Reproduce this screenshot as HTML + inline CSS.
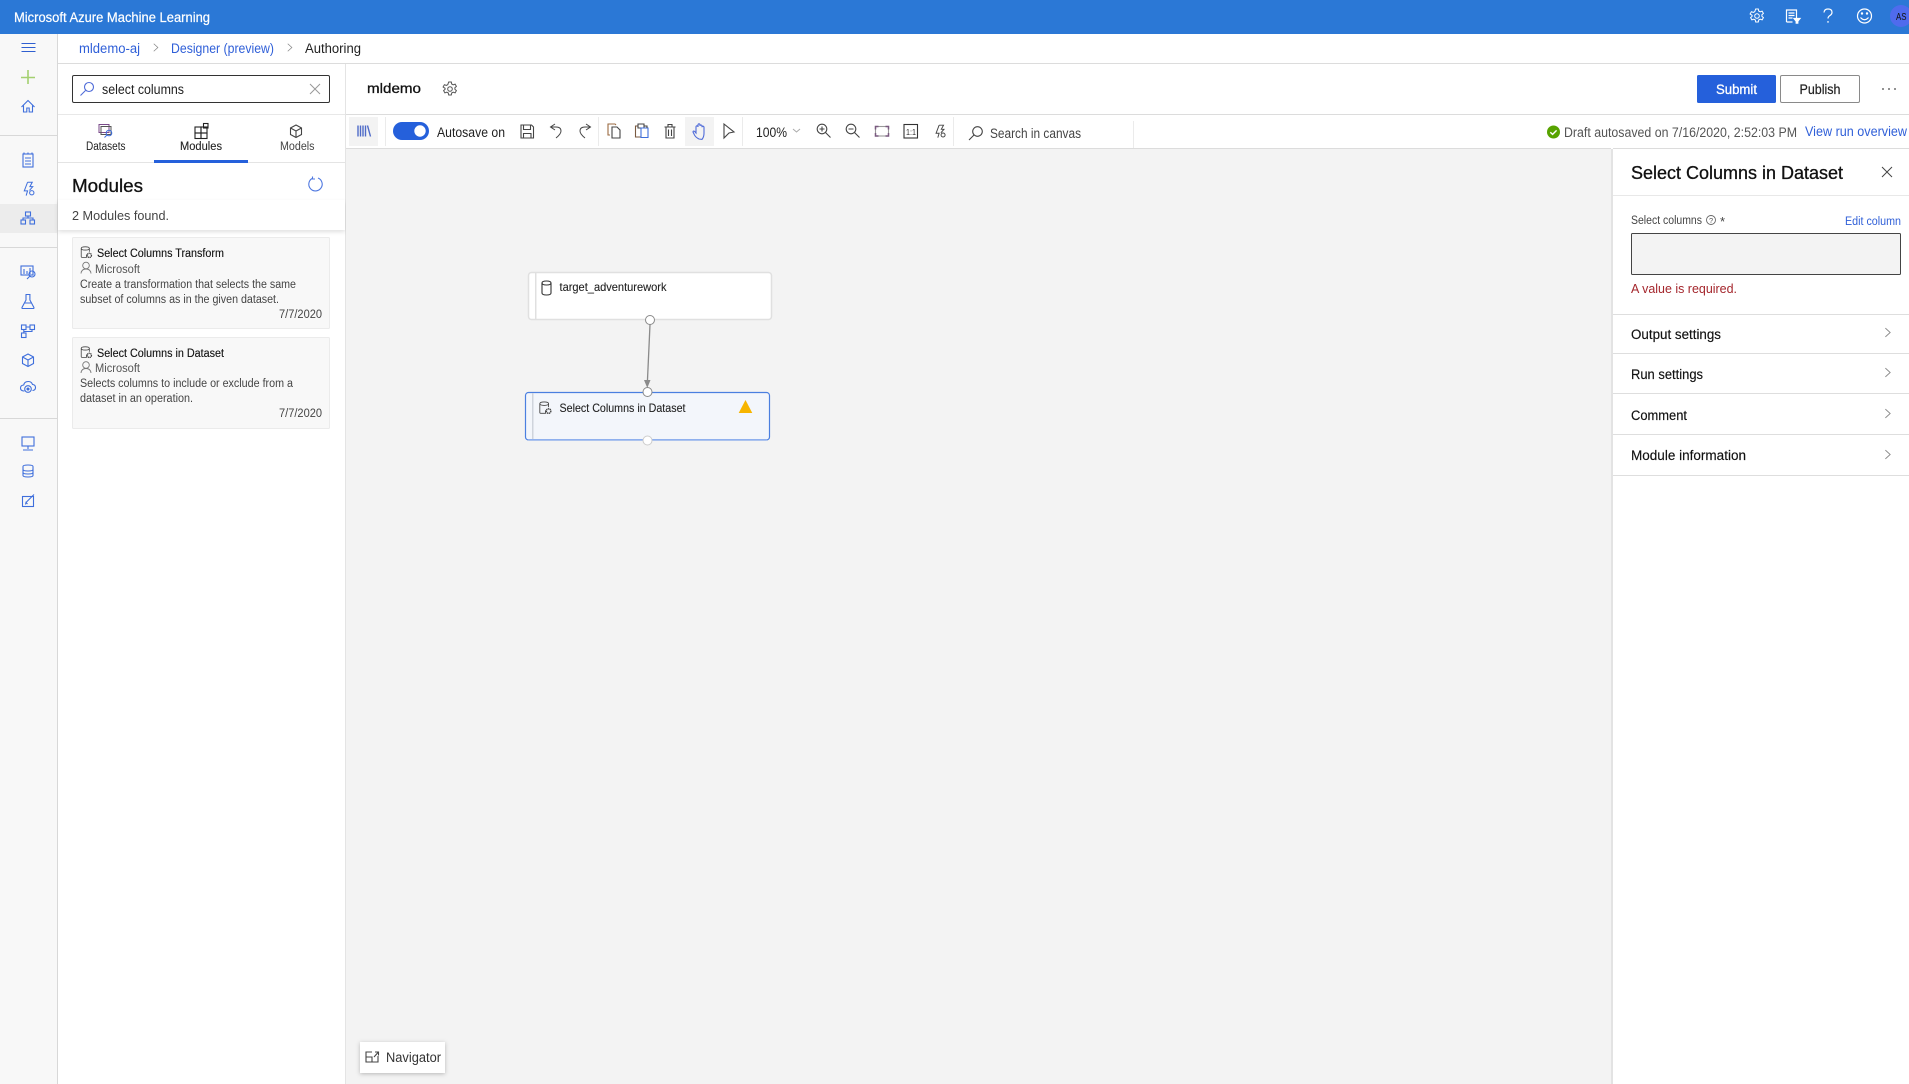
<!DOCTYPE html>
<html lang="en"><head><meta charset="utf-8"><title>Microsoft Azure Machine Learning</title>
<style>
html,body{margin:0;padding:0;background:#fff;width:1909px;height:1084px;overflow:hidden}
svg{display:block;position:absolute;left:0;top:0}
text{font-family:"Liberation Sans",sans-serif;font-size:13px;fill:#333;white-space:pre}
.sb{stroke:#111;stroke-width:.3;fill:#111}
.st{stroke:#111;stroke-width:.12;fill:#111}
.i{fill:none;stroke:#3f6fdc;stroke-width:1.1}
.k{fill:none;stroke:#444;stroke-width:1.1}
.w{fill:none;stroke:#fff;stroke-width:1.2}
.l{fill:#2f5fd8}
</style></head><body>
<svg width="1909" height="1084" viewBox="0 0 1909 1084" xmlns="http://www.w3.org/2000/svg">
<defs>
<filter id="sh" x="-20%" y="-30%" width="140%" height="170%"><feDropShadow dx="0" dy="1" stdDeviation="2" flood-color="#000" flood-opacity=".25"/></filter>
<filter id="sh2" x="-5%" y="-30%" width="110%" height="190%"><feDropShadow dx="0" dy="2" stdDeviation="2" flood-color="#000" flood-opacity=".12"/></filter>
<symbol id="mod" viewBox="0 0 16 16" overflow="visible"><g fill="none" stroke="#444" stroke-width="1"><path d="M8 10.500v3.500H2.500q-1 0-1-1V3q0-2 5-2t5 2v4"/><path d="M1.500 3q0 2 5 2t5-2"/><circle cx="11.500" cy="11.500" r="2.600" stroke-width="1.600" stroke-dasharray="1.600 .6"/></g></symbol>
<symbol id="gear" viewBox="0 0 16 16" overflow="visible"><g fill="none" stroke="currentColor" stroke-width="1"><path d="M6.700 1h2.600l.4 2 1.500.8 1.900-.7 1.300 2.300-1.500 1.300v1.600l1.500 1.300-1.300 2.300-1.900-.7-1.500.8-.4 2H6.700l-.4-2-1.500-.8-1.900.7-1.300-2.300 1.500-1.300V7.300L1.100 6l1.300-2.300 1.900.7 1.500-.8z"/><circle cx="8" cy="8" r="2.300"/></g></symbol>
<symbol id="bolt" viewBox="0 0 16 16" overflow="visible"><g fill="none" stroke="currentColor" stroke-width="1.100"><path d="M7 .8h5L9.500 5.500h3L9 9.500M5.500 15l1.500-5H3.500L7 .8"/><circle cx="11.500" cy="12" r="2.300"/></g></symbol>
<symbol id="chev" viewBox="0 0 8 12" overflow="visible"><path d="M1 1l5.500 5L1 11" fill="none" stroke="currentColor" stroke-width="1"/></symbol>
</defs>

<!-- top bar -->
<rect x="0" y="0" width="1909" height="34" fill="#2b78d6"/>
<text x="14" y="22" textLength="196" lengthAdjust="spacingAndGlyphs" style="fill:#fff;font-size:13.500px;stroke:#fff;stroke-width:.2">Microsoft Azure Machine Learning</text>
<use href="#gear" x="1749" y="8" width="16" height="16" style="color:#fff"/>
<g class="w"><path d="M1786.500 22V10h10v8M1788.500 13h6M1788.500 15.500h6M1788.500 18h4M1786.500 22h6"/><path d="M1794 18.500h6l-2.200 2.700v2h-1.600v-2z" fill="#fff"/></g>
<path class="w" d="M1824 12.500q.3-3.500 4-3.500 4 0 4 3.300 0 2-2 3.200t-2 3M1828 21v1.800" style="stroke-width:1.200"/>
<g class="w"><circle cx="1864.500" cy="16" r="7"/><path d="M1860.500 17.500q4 4.500 8 0"/><circle cx="1862" cy="13.500" r=".6" fill="#fff"/><circle cx="1867" cy="13.500" r=".6" fill="#fff"/></g>
<circle cx="1901" cy="16" r="11" fill="#4f6bed"/>
<text x="1896" y="20" textLength="10.500" lengthAdjust="spacingAndGlyphs" style="font-size:10px;fill:#111">AS</text>

<!-- left rail -->
<rect x="0" y="34" width="57" height="1050" fill="#f8f8f8"/>
<rect x="57" y="34" width="1" height="1050" fill="#d8d8d8"/>
<rect x="0" y="204" width="57" height="29" fill="#ececec"/>
<rect x="0" y="135" width="57" height="1" fill="#d8d8d8"/>
<rect x="0" y="247" width="57" height="1" fill="#d8d8d8"/>
<rect x="0" y="418" width="57" height="1" fill="#d8d8d8"/>
<g fill="#2f5fd0"><rect x="21.500" y="43" width="14" height="1"/><rect x="21.500" y="47" width="14" height="1"/><rect x="21.500" y="51" width="14" height="1"/></g>
<path d="M28 70v14M21 77.500h14" stroke="#a4d070" stroke-width="1.600" fill="none"/>
<path class="i" d="M21.500 107l6.500-6.500 6.500 6.500M23.500 105.500v6.500h3.300v-4h2.400v4h3.300v-6.500"/>
<g class="i"><rect x="23" y="154" width="10" height="13"/><path d="M25 158h6M25 161h6M25 164h6M24 152.500v2M28 152.500v2M32 152.500v2"/></g>
<use href="#bolt" x="21" y="181.500" width="15" height="15" style="color:#3f6fdc"/>
<g class="i"><rect x="25.500" y="212" width="5" height="4"/><rect x="21" y="220" width="4.500" height="4"/><rect x="30" y="220" width="4.500" height="4"/><path d="M28 216v2M23 220v-2h10v2"/></g>
<g class="i"><rect x="21" y="266" width="12" height="9"/><path d="M24 269v5M27 271v3M30 268v6"/><circle cx="32" cy="274" r="3"/><path d="M30 276l-3 3"/></g>
<path class="i" d="M25.500 294.500h5M26 295v5l-4 7.500q-.3 1 .7 1h10.500q1 0 .7-1l-4-7.500v-5M24 303h8"/>
<g class="i"><rect x="21.500" y="325" width="4.500" height="4.500"/><rect x="30" y="325" width="4.500" height="4.500"/><rect x="21.500" y="333" width="4.500" height="4.500"/><path d="M23.800 329.500v3.500M26 327h4M32 329.500v2h-8"/></g>
<path class="i" d="M28 354l5.500 3v6.500l-5.500 3-5.500-3V357zM22.500 357l5.500 3 5.500-3M28 360v6.500"/>
<g class="i"><path d="M24.500 391h-1q-3-.4-3-3 0-2.700 3.200-3 .8-3.500 4.500-3.500 3.300 0 4.300 3 3 .2 3 3t-3 3"/><circle cx="28" cy="389" r="3.300"/><circle cx="28" cy="389" r="1" fill="#3f6fdc"/></g>
<g class="i"><rect x="22" y="437" width="12" height="9"/><path d="M28 446v3M23 450h10"/></g>
<g class="i"><path d="M23 466.500q0-1.500 5-1.500t5 1.500v9q0 1.500-5 1.500t-5-1.500z"/><path d="M23 469.500q0 1.500 5 1.500t5-1.500M23 472.500q0 1.500 5 1.500t5-1.500"/></g>
<g class="i"><rect x="22.500" y="496.500" width="11" height="10"/><path d="M26 502.500l8-8M25.500 504.500l.5-2 1.500 1.500"/></g>

<!-- breadcrumb -->
<rect x="58" y="63" width="1851" height="1" fill="#dcdcdc"/>
<text x="79" y="53" textLength="61" lengthAdjust="spacingAndGlyphs" class="l" style="font-size:13.500px">mldemo-aj</text>
<use href="#chev" x="153" y="43" width="6" height="9" style="color:#888"/>
<text x="171" y="53" textLength="103" lengthAdjust="spacingAndGlyphs" class="l" style="font-size:13.500px">Designer (preview)</text>
<use href="#chev" x="287" y="43" width="6" height="9" style="color:#888"/>
<text x="305" y="53" textLength="56" lengthAdjust="spacingAndGlyphs" style="font-size:13.500px;fill:#222">Authoring</text>

<!-- left panel -->
<rect x="345" y="64" width="1" height="1020" fill="#e4e4e4"/>
<rect x="72.500" y="75.500" width="257" height="27" rx="1.500" fill="#fff" stroke="#333"/>
<g fill="none" stroke="#4f6bd8" stroke-width="1.100"><circle cx="89" cy="87" r="4.500"/><path d="M85.500 90.500L80.500 95.500"/></g>
<text x="102" y="94" textLength="82" lengthAdjust="spacingAndGlyphs" style="font-size:13.500px;fill:#222">select columns</text>
<path d="M310 84l10 10M320 84l-10 10" stroke="#999" stroke-width="1" fill="none"/>
<rect x="58" y="114" width="287" height="1" fill="#e8e8e8"/>
<rect x="58" y="162" width="287" height="1" fill="#e4e4e4"/>
<rect x="154" y="160" width="94" height="3" fill="#2560db"/>
<g fill="none" stroke="#555" stroke-width="1"><rect x="99" y="124.500" width="10" height="8" stroke="#7a4a8a"/><rect x="101" y="126.500" width="10" height="8"/><circle cx="109" cy="133" r="2.800" stroke="#3f6fdc"/><path d="M107 135l-2.500 2.500" stroke="#3f6fdc"/></g>
<text x="86" y="150" textLength="39.500" lengthAdjust="spacingAndGlyphs" style="font-size:11.500px;fill:#222">Datasets</text>
<g fill="none" stroke="#222" stroke-width="1.100"><rect x="195" y="127" width="6" height="6"/><rect x="201" y="127" width="6" height="6"/><rect x="195" y="133" width="6" height="5.500"/><rect x="201" y="133" width="6" height="5.500"/><rect x="203.500" y="123.500" width="4.500" height="4.500"/></g>
<text x="180" y="150" textLength="42" lengthAdjust="spacingAndGlyphs" style="font-size:11.500px;fill:#222;stroke:#222;stroke-width:.1">Modules</text>
<path class="k" d="M296 125l5.500 3v6.500l-5.500 3-5.500-3V128zM290.500 128l5.500 3 5.500-3M296 131v6.500"/>
<text x="280" y="150" textLength="34.500" lengthAdjust="spacingAndGlyphs" style="font-size:11.500px;fill:#444">Models</text>
<text x="72" y="192" textLength="71" lengthAdjust="spacingAndGlyphs" class="sb" style="font-size:18px">Modules</text>
<path d="M312 178.500a6.700 6.700 0 1 0 6-.5M312.500 176.500v2.500h2.500" fill="none" stroke="#4f78e0" stroke-width="1.100"/>
<rect x="58" y="200" width="287" height="30" fill="#fff" filter="url(#sh2)"/>
<text x="72" y="220" textLength="97" lengthAdjust="spacingAndGlyphs" style="font-size:13px;fill:#444">2 Modules found.</text>

<!-- cards -->
<rect x="72.500" y="237.500" width="257" height="91" rx="1" fill="#f8f8f8" stroke="#ebebeb"/>
<use href="#mod" x="80" y="246" width="13" height="13"/>
<text x="97" y="257" textLength="127" lengthAdjust="spacingAndGlyphs" class="st" style="font-size:11.500px">Select Columns Transform</text>
<g fill="none" stroke="#777" stroke-width=".9"><circle cx="86" cy="265.500" r="3.300"/><path d="M81 273.500q.5-4.500 5-4.500t5 4.500"/></g>
<text x="95" y="273" textLength="45" lengthAdjust="spacingAndGlyphs" style="font-size:11.500px;fill:#555">Microsoft</text>
<text x="80" y="288" textLength="216" lengthAdjust="spacingAndGlyphs" style="font-size:11.500px;fill:#444">Create a transformation that selects the same</text>
<text x="80" y="303" textLength="199" lengthAdjust="spacingAndGlyphs" style="font-size:11.500px;fill:#444">subset of columns as in the given dataset.</text>
<text x="279" y="318" textLength="43" lengthAdjust="spacingAndGlyphs" style="font-size:11.500px;fill:#444">7/7/2020</text>

<rect x="72.500" y="337.500" width="257" height="91" rx="1" fill="#f8f8f8" stroke="#ebebeb"/>
<use href="#mod" x="80" y="346" width="13" height="13"/>
<text x="97" y="357" textLength="127" lengthAdjust="spacingAndGlyphs" class="st" style="font-size:11.500px">Select Columns in Dataset</text>
<g fill="none" stroke="#777" stroke-width=".9"><circle cx="86" cy="365" r="3.300"/><path d="M81 373q.5-4.500 5-4.500t5 4.500"/></g>
<text x="95" y="372" textLength="45" lengthAdjust="spacingAndGlyphs" style="font-size:11.500px;fill:#555">Microsoft</text>
<text x="80" y="387" textLength="213" lengthAdjust="spacingAndGlyphs" style="font-size:11.500px;fill:#444">Selects columns to include or exclude from a</text>
<text x="80" y="402" textLength="113" lengthAdjust="spacingAndGlyphs" style="font-size:11.500px;fill:#444">dataset in an operation.</text>
<text x="279" y="417" textLength="43" lengthAdjust="spacingAndGlyphs" style="font-size:11.500px;fill:#444">7/7/2020</text>

<!-- title row -->
<rect x="346" y="114" width="1563" height="1" fill="#dcdcdc"/>
<text x="367" y="93" textLength="54" lengthAdjust="spacingAndGlyphs" class="sb" style="font-size:14px">mldemo</text>
<use href="#gear" x="442" y="81" width="16" height="16" style="color:#555"/>
<rect x="1697" y="75" width="79" height="28" rx="1.500" fill="#2560db"/>
<text x="1716" y="94" textLength="41" lengthAdjust="spacingAndGlyphs" style="font-size:13.500px;fill:#fff;stroke:#fff;stroke-width:.3">Submit</text>
<rect x="1780.500" y="75.500" width="79" height="27" rx="1.500" fill="#fff" stroke="#8a8a8a"/>
<text x="1799.500" y="94" textLength="41" lengthAdjust="spacingAndGlyphs" style="font-size:13.500px;fill:#222;stroke:#222;stroke-width:.2">Publish</text>
<g fill="#444"><circle cx="1883" cy="89" r=".9"/><circle cx="1889" cy="89" r=".9"/><circle cx="1895" cy="89" r=".9"/></g>

<!-- toolbar -->
<rect x="346" y="148" width="1265" height="1" fill="#dcdcdc"/>
<rect x="1613" y="148" width="296" height="1" fill="#dcdcdc"/>
<rect x="349" y="117" width="29" height="29" fill="#f3f3f3"/>
<path d="M358 125.500v11M360.500 125.500v11M363 125.500v11M365.500 125.500v11M367.500 125.500l3 11" stroke="#4f6bc8" stroke-width="1.400" fill="none"/>
<rect x="385" y="117" width="1" height="29" fill="#ebebeb"/>
<rect x="393" y="122" width="36" height="18" rx="9" fill="#2560db"/>
<circle cx="420" cy="131" r="5.700" fill="#fff"/>
<text x="437" y="137" textLength="68" lengthAdjust="spacingAndGlyphs" style="font-size:13.500px;fill:#222">Autosave on</text>
<g class="k"><path d="M521 125h10.500l2 2v11H521zM523.500 125v4.500h7V125M523.500 138v-4.500h7.500v4.500"/></g>
<path class="k" d="M555 124l-4.500 3 4.500 3M550.500 127h5.500q5 0 5 4 0 3-5 7" style="stroke-width:1"/>
<path class="k" d="M586 124l4.500 3-4.500 3M590.500 127H585q-5 0-5 4 0 3 5 7" style="stroke-width:1"/>
<rect x="598" y="117" width="1" height="29" fill="#ebebeb"/>
<g class="k"><path d="M610 135h-2v-11h7l1 1" stroke="#9a6a40"/><path d="M612 127h5l3 3v8h-8z"/></g>
<g class="k"><path d="M638 126h-2.500v11h5" stroke="#7a5a40"/><path d="M638 124h6v4h-6z"/><path d="M641 128h7v9.500h-7z" stroke="#3f6fdc"/><path d="M644 126h3v2"/></g>
<g class="k"><path d="M664.500 127h11M668 127v-2.500h4v2.500M666 127v11h8v-11M668.500 129.500v6.500M671.500 129.500v6.500"/></g>
<rect x="685" y="117" width="29" height="29" fill="#f3f3f3"/>
<path d="M699 139q-4-2-5-5l-1-2q0-1.500 1.500-.7l1.500 1.700v-6q0-1.200 1-1.200t1 1.200v-2q0-1.200 1-1.200t1 1.200v1q0-1 1-1t1 1.200v1q.2-1 1-1t1 1.200v6q0 3.500-2 6z" fill="none" stroke="#4f6bd8" stroke-width="1.100"/>
<path class="k" d="M724 124l10 8-5 1-5 5z"/>
<rect x="742" y="117" width="1" height="29" fill="#ebebeb"/>
<text x="756" y="137" textLength="31" lengthAdjust="spacingAndGlyphs" style="font-size:13.500px;fill:#222">100%</text>
<path d="M793 129l3.500 3 3.500-3" stroke="#aaa" fill="none"/>
<g class="k"><circle cx="822" cy="129" r="4.800"/><path d="M825.500 132.500l5 5M819.500 129h5M822 126.500v5"/></g>
<g class="k"><circle cx="851" cy="129" r="4.800"/><path d="M854.500 132.500l5 5M848.500 129h5"/></g>
<g class="k"><rect x="875.500" y="126.500" width="13" height="9.500" stroke="#999"/><path d="M875.500 129.500v-3h3M888.500 129.500v-3h-3M875.500 133v3h3M888.500 133v3h-3" stroke="#7a5a80" stroke-width="1.500"/></g>
<rect x="904" y="124.500" width="13.500" height="13.500" fill="none" stroke="#333" stroke-width="1.100"/>
<text x="906" y="135" textLength="10" lengthAdjust="spacingAndGlyphs" style="font-size:8.500px;fill:#333">1:1</text>
<use href="#bolt" x="933" y="124" width="14" height="15" style="color:#444"/>
<rect x="953" y="117" width="1" height="29" fill="#ebebeb"/>
<g class="k"><circle cx="977.500" cy="131.500" r="4.800"/><path d="M974 135l-5 5"/></g>
<text x="990" y="138" textLength="91" lengthAdjust="spacingAndGlyphs" style="font-size:13.500px;fill:#444">Search in canvas</text>
<rect x="1133" y="121" width="1" height="27" fill="#ebebeb"/>
<circle cx="1553.500" cy="132" r="6.500" fill="#57a300"/>
<path d="M1550.300 132.200l2.300 2.200 4-4" stroke="#fff" stroke-width="1.400" fill="none"/>
<text x="1564" y="137" textLength="233" lengthAdjust="spacingAndGlyphs" style="font-size:13.500px;fill:#555">Draft autosaved on 7/16/2020, 2:52:03 PM</text>
<text x="1805" y="136" textLength="102" lengthAdjust="spacingAndGlyphs" class="l" style="font-size:13.500px">View run overview</text>

<!-- canvas -->
<rect x="346" y="149" width="1265" height="935" fill="#f3f3f3"/>
<rect x="1611" y="149" width="2" height="935" fill="#e3e3e3"/>

<!-- node 1 -->
<rect x="528.500" y="272.500" width="243" height="47" rx="3" fill="#fff" stroke="#e0e0e0" stroke-width="1.500"/>
<rect x="535" y="273" width="1.500" height="46" fill="#e0e0e0"/>
<g class="k" style="stroke:#333"><path d="M542 283q0-2 4.500-2t4.500 2v10q0 2-4.500 2t-4.500-2z"/><path d="M542 283q0 2 4.500 2t4.500-2"/></g>
<text x="559.500" y="291" textLength="107" lengthAdjust="spacingAndGlyphs" style="font-size:12px;fill:#222;stroke:#222;stroke-width:.1">target_adventurework</text>
<!-- connector -->
<path d="M650 324.500L647.300 384" stroke="#8a8a8a" stroke-width="1.300" fill="none"/>
<path d="M644 380h6.500L647.300 388z" fill="#8a8a8a"/>
<circle cx="650" cy="320" r="4.500" fill="#fff" stroke="#8a8a8a"/>
<!-- node 2 -->
<rect x="525.500" y="392.500" width="244" height="47.500" rx="3" fill="#f3f6fb" stroke="#4a7fe0" stroke-width="1.200"/>
<rect x="532" y="393" width="1.500" height="47" fill="#cfd4dc"/>
<rect x="528" y="439" width="239" height="1.500" fill="#8fb0ee"/>
<use href="#mod" x="538.500" y="401" width="14" height="14"/>
<text x="559.500" y="412" textLength="126" lengthAdjust="spacingAndGlyphs" style="font-size:12px;fill:#222;stroke:#222;stroke-width:.1">Select Columns in Dataset</text>
<path d="M745.500 400l6.800 13h-13.600z" fill="#f7b500"/>
<circle cx="647.500" cy="392" r="4.500" fill="#fff" stroke="#8a8a8a"/>
<circle cx="647.500" cy="440.500" r="4.500" fill="#fff" stroke="#ccc"/>

<!-- navigator -->
<rect x="360" y="1042" width="85" height="31" fill="#fff" filter="url(#sh)"/>
<g class="k"><path d="M372 1052h-6v10h12v-6M366 1057h6v5"/><path d="M374 1057l4-4.500M375 1052h3.500v3.500"/></g>
<text x="386" y="1062" textLength="55" lengthAdjust="spacingAndGlyphs" style="font-size:13.500px;fill:#333">Navigator</text>

<!-- right panel -->
<text x="1631" y="179" textLength="212" lengthAdjust="spacingAndGlyphs" class="sb" style="font-size:18px">Select Columns in Dataset</text>
<path d="M1882 167l10 10M1892 167l-10 10" stroke="#444" stroke-width="1" fill="none"/>
<rect x="1613" y="195" width="296" height="1" fill="#e8e8e8"/>
<text x="1631" y="224" textLength="71" lengthAdjust="spacingAndGlyphs" style="font-size:11.500px;fill:#444">Select columns</text>
<circle cx="1711" cy="220" r="4.500" fill="none" stroke="#666" stroke-width=".9"/>
<text x="1709" y="223" style="font-size:7.500px;fill:#555">?</text>
<text x="1720" y="226" style="font-size:13px;fill:#444">*</text>
<text x="1845" y="225" textLength="56" lengthAdjust="spacingAndGlyphs" class="l" style="font-size:11.500px">Edit column</text>
<rect x="1631.500" y="233.500" width="269" height="41" rx="1" fill="#f3f3f3" stroke="#444"/>
<text x="1631" y="293" textLength="106" lengthAdjust="spacingAndGlyphs" style="font-size:13px;fill:#a4262c">A value is required.</text>
<rect x="1613" y="314" width="296" height="1" fill="#dedede"/>
<text x="1631" y="339" textLength="90" lengthAdjust="spacingAndGlyphs" style="font-size:13.500px;fill:#111;stroke:#111;stroke-width:.15">Output settings</text>
<use href="#chev" x="1884.500" y="327" width="7" height="11" style="color:#888"/>
<rect x="1613" y="353" width="296" height="1" fill="#dedede"/>
<text x="1631" y="379" textLength="72" lengthAdjust="spacingAndGlyphs" style="font-size:13.500px;fill:#111;stroke:#111;stroke-width:.15">Run settings</text>
<use href="#chev" x="1884.500" y="367" width="7" height="11" style="color:#888"/>
<rect x="1613" y="393" width="296" height="1" fill="#dedede"/>
<text x="1631" y="420" textLength="56" lengthAdjust="spacingAndGlyphs" style="font-size:13.500px;fill:#111;stroke:#111;stroke-width:.15">Comment</text>
<use href="#chev" x="1884.500" y="408" width="7" height="11" style="color:#888"/>
<rect x="1613" y="434" width="296" height="1" fill="#dedede"/>
<text x="1631" y="460" textLength="115" lengthAdjust="spacingAndGlyphs" style="font-size:13.500px;fill:#111;stroke:#111;stroke-width:.15">Module information</text>
<use href="#chev" x="1884.500" y="449" width="7" height="11" style="color:#888"/>
<rect x="1613" y="475" width="296" height="1" fill="#dedede"/>
</svg>
</body></html>
